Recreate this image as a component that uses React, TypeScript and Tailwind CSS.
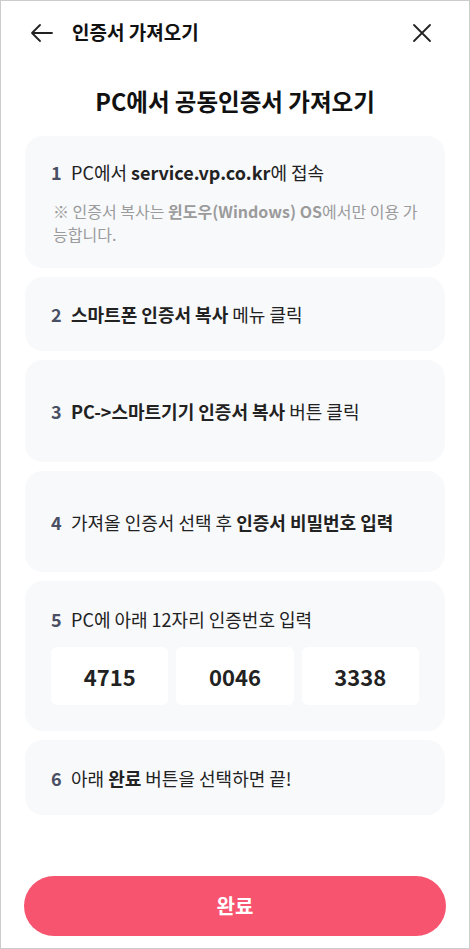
import React from "react";

const font = { fontFamily: '"Noto Sans CJK KR", "Noto Sans", sans-serif' };

function Step({ n, children, className = "" }: { n: number; children: React.ReactNode; className?: string }) {
  return (
    <div className={`rounded-[18px] bg-[#f8f9fb] pl-[26px] pr-[20px] ${className}`}>
      <div className="flex items-baseline text-[18px] leading-[24px] text-[#222]">
        <span className="w-[20px] shrink-0 text-[18px] font-bold text-[#4a5064]">{n}</span>
        <span>{children}</span>
      </div>
    </div>
  );
}

export default function App() {
  const code = ["4715", "0046", "3338"];
  return (
    <div style={font} className="box-border flex h-[949px] w-[470px] flex-col border border-[#cccccc] bg-white">
      {/* header */}
      <header className="flex h-[63px] items-center pl-[29px] pr-[37px]">
        <svg width="24" height="20" viewBox="0 0 24 20" fill="none" stroke="#222" strokeWidth="1.8" strokeLinecap="round" strokeLinejoin="round">
          <path d="M22 10H2M10 2L2 10l8 8" />
        </svg>
        <h1 className="ml-[18px] text-[19px] font-bold text-[#111]">인증서 가져오기</h1>
        <svg className="ml-auto" width="20" height="20" viewBox="0 0 20 20" fill="none" stroke="#222" strokeWidth="1.8" strokeLinecap="round">
          <path d="M2 2l16 16M18 2L2 18" />
        </svg>
      </header>

      <h2 className="mt-[21px] text-center text-[23.5px] font-bold leading-[32px] text-[#111]">PC에서 공동인증서 가져오기</h2>

      <div className="mx-[24px] mt-[19px] flex flex-col gap-[9px]">
        <div className="h-[132px] rounded-[18px] bg-[#f8f9fb] pl-[26px] pr-[20px] pt-[24px]">
          <div className="flex items-baseline text-[18px] leading-[24px] text-[#222]">
            <span className="w-[20px] shrink-0 text-[18px] font-bold text-[#4a5064]">1</span>
            <span>
              PC에서 <b className="font-bold">service.vp.co.kr</b>에 접속
            </span>
          </div>
          <p className="mt-[16px] pl-[2px] text-[16px] leading-[23px] text-[#9b9b9b]">
            ※ 인증서 복사는 <b className="font-bold">윈도우(Windows) OS</b>에서만 이용 가능합니다.
          </p>
        </div>

        <Step n={2} className="flex h-[74px] items-center">
          <b className="font-bold">스마트폰 인증서 복사</b> 메뉴 클릭
        </Step>
        <Step n={3} className="flex h-[102px] items-center">
          <b className="font-bold">PC-&gt;스마트기기 인증서 복사</b> 버튼 클릭
        </Step>
        <Step n={4} className="flex h-[101px] items-center">
          가져올 인증서 선택 후 <b className="font-bold">인증서 비밀번호 입력</b>
        </Step>

        <div className="h-[150px] rounded-[18px] bg-[#f8f9fb] px-[26px] pt-[26px]">
          <div className="flex items-baseline text-[18px] leading-[24px] text-[#222]">
            <span className="w-[20px] shrink-0 text-[18px] font-bold text-[#4a5064]">5</span>
            <span>PC에 아래 12자리 인증번호 입력</span>
          </div>
          <div className="mt-[16px] grid grid-cols-3 gap-[8px]">
            {code.map((c) => (
              <div key={c} className="flex h-[58px] items-center justify-center rounded-[6px] bg-white text-[22px] font-bold text-[#222]">
                {c}
              </div>
            ))}
          </div>
        </div>

        <Step n={6} className="flex h-[75px] items-center">
          아래 <b className="font-bold">완료</b> 버튼을 선택하면 끝!
        </Step>
      </div>

      <div className="mt-auto px-[23px] pb-[12px]">
        <button className="h-[60px] w-full rounded-full bg-[#f7546f] text-[20px] font-bold text-white">완료</button>
      </div>
    </div>
  );
}
